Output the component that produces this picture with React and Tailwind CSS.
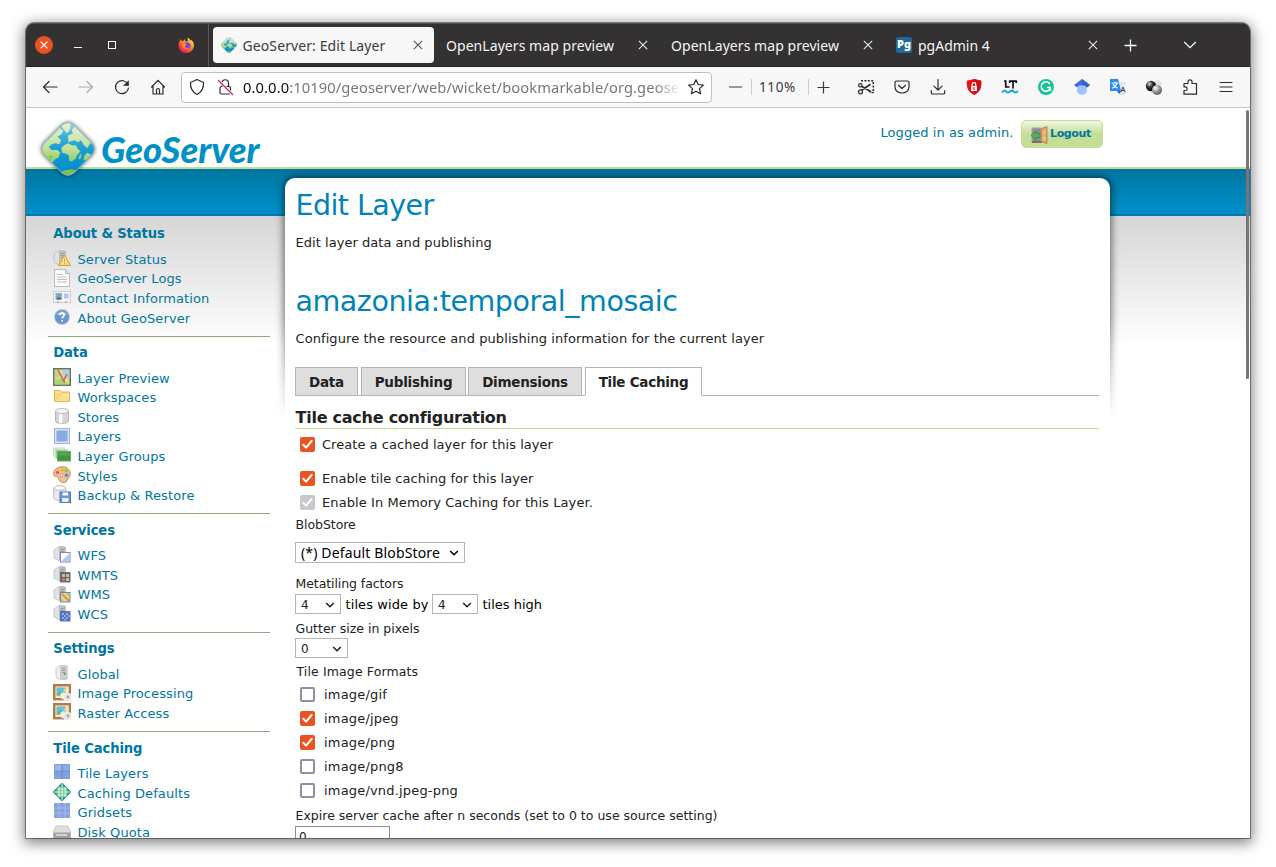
import React from "react";

const UI = "font-['Noto_Sans','Open_Sans',sans-serif]";

function Close({ className = "", color = "#e8e8e8" }) {
  return (
    <svg width="10" height="10" viewBox="0 0 10 10" className={"shrink-0 " + className}>
      <path d="M.8 .8l8.400 8.400M9.200 .8L.8 9.200" stroke={color} strokeWidth="1.100" fill="none" />
    </svg>
  );
}

function GeoDiamond({ size }) {
  return (
    <svg width={size} height={size} viewBox="0 0 56 56" className="shrink-0">
      <defs>
        <linearGradient id="sea" x1="0" y1="0" x2="0" y2="1">
          <stop offset="0" stopColor="#a5d8e6" />
          <stop offset=".25" stopColor="#3eb0da" />
          <stop offset=".55" stopColor="#149cd2" />
          <stop offset="1" stopColor="#0088c6" />
        </linearGradient>
        <linearGradient id="land" gradientUnits="userSpaceOnUse" x1="0" y1="0" x2="0" y2="48">
          <stop offset="0" stopColor="#e6f1dc" />
          <stop offset=".6" stopColor="#bfdf94" />
          <stop offset="1" stopColor="#7dc050" />
        </linearGradient>
        <clipPath id="dia">
          <path d="M21.500 3.500 Q28 -2 34.500 3.500 L52.500 21.500 Q58 28 52.500 34.500 L34.500 52.500 Q28 58 21.500 52.500 L3.500 34.500 Q-2 28 3.500 21.500 Z" />
        </clipPath>
      </defs>
      <g clipPath="url(#dia)">
        <rect width="56" height="56" fill="url(#sea)" />
        <path fill="url(#land)" d="M0 22L19 3l1 4 3 2-2 4-4 2 4 4-2 4-4-1-4 1-3 3 3 3 6 0 3 3-2 5-4 2-3 5L0 31zM21 3l3-3h7l-1 8-3 4-4-5zM28 14l5-2-1-4 4-4 8 2 12 17-5-1-3 5-3.500-3-3-5-3 2-4-2-6 2zM24 24l4-2 4 2 4 0 3 5 2 1-4 5-1 3-4 3-3-1 0-5-3-2-4-1-1-5zM40 34l2-1-1 5-2 1zM45 35l3-3 4 2-4 5-4 1zM20 53l4-3 7-1 6 1-8 7z" />
        <path d="M8 34l5 2-4 5z" fill="#8cc850" />
      </g>
      <path d="M21.500 3.500 Q28 -2 34.500 3.500 L52.500 21.500 Q58 28 52.500 34.500 L34.500 52.500 Q28 58 21.500 52.500 L3.500 34.500 Q-2 28 3.500 21.500 Z" fill="none" stroke="#8fb4ba" strokeWidth="1.200" opacity=".8" />
    </svg>
  );
}

function Firefox() {
  return (
    <svg width="17" height="17" viewBox="0 0 17 17">
      <defs>
        <linearGradient id="fx" x1=".9" y1="0" x2=".2" y2="1">
          <stop offset="0" stopColor="#fff44f" />
          <stop offset=".4" stopColor="#ff9a1f" />
          <stop offset=".75" stopColor="#ff3647" />
          <stop offset="1" stopColor="#e31587" />
        </linearGradient>
      </defs>
      <path d="M1.500 4.500L3 2l.5 2 2-.3L7 2l.5 2.500L10 4l-.5-3.500c2 .8 2.500 2 3.200 3.200L13.500 3C16 5 16.500 8 15.500 11a8 8 0 0 1-7 5C4 16 .6 12.600.6 8.500c0-1.500.3-3 .9-4z" fill="url(#fx)" />
      <circle cx="9" cy="8.800" r="3.500" fill="#7a3be8" />
      <path d="M4 7c2-1.500 4-.5 5 .3L7 9c0 2 2.500 3 5 1-1 3-6 3.500-7.500.5C4 9 3.600 8 4 7z" fill="#ff8a16" />
    </svg>
  );
}

/* Toolbar glyphs share an 18px box. */
function Glyph({ children, className = "", stroke = "#2b2a33" }) {
  return (
    <svg width="18" height="18" viewBox="0 0 18 18" fill="none" stroke={stroke} strokeWidth="1.200" strokeLinecap="round" strokeLinejoin="round" className={"shrink-0 " + className}>
      {children}
    </svg>
  );
}

function TitleBar() {
  return (
    <div className={"flex h-[44px] shrink-0 items-center bg-[#333132] border-t border-[#514f50] text-[#f4f4f4] shadow-[inset_0_-1px_0_#232122] " + UI}>
      <div className="ml-[9px] -mt-px flex size-[18px] items-center justify-center rounded-full bg-[#e95420]">
        <svg width="8" height="8" viewBox="0 0 8 8"><path d="M.6 .6l6.800 6.800M7.400 .6L.6 7.400" stroke="#fff" strokeWidth="1.300" /></svg>
      </div>
      <div className="ml-[21px] mt-[3px] h-px w-[8px] bg-white" />
      <div className="-mt-[2px] ml-[26px] size-[8px] border border-white" />
      <div className="ml-[62px] -mt-px"><Firefox /></div>
      <div className="ml-[13px] h-full w-px bg-[#5a5859]" />
      <div className="-mt-[2px] ml-[4px] flex h-[36px] w-[221px] items-center rounded-[4px] bg-[#f7f7f7] pl-[8px] pr-[11px] text-[#3c3b3d]">
        <GeoDiamond size={16} />
        <span className="ml-[5.500px] mt-[2px] whitespace-nowrap text-[14px] tracking-[0.100px]">GeoServer: Edit Layer</span>
        <Close color="#555" className="ml-auto" />
      </div>
      <div className="ml-[12px] flex w-[213px] items-center">
        <span className="whitespace-nowrap text-[14px] tracking-[0.060px]">OpenLayers map preview</span>
        <Close className="-mt-px ml-auto mr-[11px]" />
      </div>
      <div className="ml-[12px] flex w-[213px] items-center">
        <span className="whitespace-nowrap text-[14px] tracking-[0.060px]">OpenLayers map preview</span>
        <Close className="-mt-px ml-auto mr-[11px]" />
      </div>
      <div className="ml-[12px] flex w-[213px] items-center">
        <span className="-mt-px flex size-[16px] items-center justify-center rounded-[2px] bg-[#226a93] pb-[3px] font-['Noto_Sans',sans-serif] text-[11px] font-black leading-none text-white">Pg</span>
        <span className="ml-[6px] whitespace-nowrap text-[14px]">pgAdmin 4</span>
        <Close className="-mt-px ml-auto mr-[11px]" />
      </div>
      <svg width="13" height="13" viewBox="0 0 13 13" className="ml-[15px]"><path d="M6.500 .5v12M.5 6.500h12" stroke="#fff" strokeWidth="1.300" /></svg>
      <svg width="14" height="8" viewBox="0 0 14 8" className="-mt-[2px] ml-[46px]"><path d="M1.200 1l5.800 5.600L12.800 1" stroke="#fff" strokeWidth="1.200" fill="none" /></svg>
    </div>
  );
}

function ToolBar() {
  return (
    <div className={"flex h-[41px] shrink-0 items-center border-b border-[#c3c3c3] bg-[#f7f7f7] " + UI}>
      <Glyph className="ml-[15px]"><path d="M2.500 9h13.500M8 3.500L2.500 9 8 14.500" /></Glyph>
      <Glyph className="ml-[18px]" stroke="#a9a9ab"><path d="M2 9h13.500M10 3.500L15.500 9 10 14.500" /></Glyph>
      <Glyph className="ml-[18px]"><path d="M15 6.500A6.500 6.500 0 1 0 15.500 10" /><path d="M15.500 3v4.500H11z" fill="#2b2a33" strokeWidth=".6" /></Glyph>
      <Glyph className="ml-[18px]"><path d="M2.500 9L9 2.300 15.500 9M4 7.800V16h10V7.800M7.500 16v-4a1.500 1.500 0 0 1 3 0v4" /></Glyph>
      <div className="ml-[14px] flex h-[31px] w-[531px] items-center rounded-[4px] border border-[#bfbfbf] bg-white">
        <Glyph className="ml-[6px]"><path d="M9 1.500l6.500 3c.3 6-2 9.700-6.500 12C4.500 14.200 2.200 10.500 2.500 4.500z" /></Glyph>
        <Glyph className="ml-[10px]">
          <rect x="4" y="8.500" width="10.500" height="7.500" rx="1.500" /><path d="M6 8.500V5a3.200 3.200 0 0 1 6.500 0v3.500" />
          <path d="M2.500 2.500l14 14" stroke="#fff" strokeWidth="3" /><path d="M2.500 2.500l14 14" stroke="#e3174f" />
        </Glyph>
        <div className="ml-[9px] w-[438px] overflow-hidden whitespace-nowrap text-[14.700px] tracking-[0.110px] text-[#77767a] [mask-image:linear-gradient(to_right,#000_94%,transparent)]">
          <span className="text-[#0c0c0d]">0.0.0.0</span>:10190/geoserver/web/wicket/bookmarkable/org.geose
        </div>
        <Glyph className="ml-[6px]"><path d="M9 1.700l2.200 4.800 5.200.6-3.900 3.500 1.100 5.200L9 13.200l-4.600 2.600 1.100-5.200L1.600 7.100l5.200-.6z" /></Glyph>
      </div>
      <svg width="13" height="2" viewBox="0 0 13 2" className="ml-[17px]"><path d="M0 1h13" stroke="#3a3940" strokeWidth="1.200" /></svg>
      <div className="ml-[9px] h-[16px] w-px bg-[#cfcfcf]" />
      <span className="ml-[7px] w-[37px] whitespace-nowrap text-[13.500px] tracking-[0.600px] text-[#3a3940]">110%</span>
      <div className="ml-[12px] h-[16px] w-px bg-[#cfcfcf]" />
      <svg width="13" height="13" viewBox="0 0 13 13" className="ml-[8px]"><path d="M6.500 .5v12M.5 6.500h12" stroke="#3a3940" strokeWidth="1.200" /></svg>
      <div className="ml-[27px] flex items-center gap-[18px]">
        <Glyph>
          <path d="M4 2.800h12.300v11.700H12.500" strokeDasharray="2 1.400" strokeWidth="1.600" strokeLinecap="butt" />
          <path d="M5 12L13 6.500M5 8.500L13.500 13.500" strokeWidth="1.600" /><circle cx="3.300" cy="7.300" r="1.700" /><circle cx="3.500" cy="13.800" r="2" />
        </Glyph>
        <Glyph><path d="M3.500 3h11A1.500 1.500 0 0 1 16 4.500V9c0 8-14 8-14 0V4.500A1.500 1.500 0 0 1 3.500 3zM5.500 7.200L9 10.500l3.500-3.300" /></Glyph>
        <Glyph><path d="M9 1.500v10.500M5 8.200l4 4 4-4M2.300 12.500v2.200a1.300 1.300 0 0 0 1.300 1.300h10.800a1.300 1.300 0 0 0 1.300-1.300v-2.200" /></Glyph>
        <Glyph stroke="none">
          <path d="M9 1l7.200 1.800c.5 7-1 11-7.200 14.200C3 13.800 1.300 9.800 1.800 2.800z" fill="#f0101a" /><path d="M9 1l7.200 1.800c.5 7-1 11-7.200 14.200z" fill="#d60d14" />
          <path d="M6 8h6v5H6z" fill="#fff" /><path d="M7.200 8V6.500a1.800 1.800 0 0 1 3.600 0V8" stroke="#fff" strokeWidth="1.200" /><path d="M9 9.600v1.800" stroke="#e31117" />
        </Glyph>
        <Glyph>
          <path d="M3 3h2.500M4.700 2.500v6.700M4 9h4.500M8.500 3.200h7M8.700 2.500v2.500M15.300 2.500v2.500M12 3v7.500" stroke="#111" strokeWidth="1.700" strokeLinecap="butt" strokeLinejoin="miter" />
          <path d="M1.500 14c1.500-2 3-1.500 3.700-.5s2.300 1.800 3.800 0 3-1 3.700 0 2.300 1.800 3.800 0" stroke="#0da0e2" strokeWidth="1.900" />
        </Glyph>
        <Glyph stroke="none"><circle cx="9" cy="9" r="8" fill="#15c39a" /><path d="M12.500 5.500a4.700 4.700 0 1 0 1 4H10.500M13.500 9.500v3" stroke="#fff" strokeWidth="1.500" /></Glyph>
        <Glyph stroke="none"><circle cx="9" cy="12" r="5" fill="#a0c3ff" /><path d="M9 1l8 6-3.300 2.700C12 6.500 6 6.500 4.300 9.700L1 7z" fill="#4272e0" /><path d="M9 1l8 6-3.300 2.700C12.500 7.500 11 7 9 7z" fill="#3262c8" /></Glyph>
        <Glyph stroke="none">
          <path d="M9 4h7.500v13H10z" fill="#e4e5e8" /><path d="M1 1h8l3 12H1z" fill="#2b8cf0" /><path d="M8 13h4l-2 3z" fill="#1867c0" />
          <path d="M3 5h6M6 4v1M8 5.200c-.8 2.500-2.500 4-4.500 4.800M4.200 6.500c1 1.600 2.500 2.800 4 3.500" stroke="#fff" strokeWidth="1.200" />
          <path d="M12 14l2-5 2 5M12.600 12.500h2.800" stroke="#4a4f57" strokeWidth="1" />
        </Glyph>
        <svg width="18" height="18" viewBox="0 0 18 18">
          <defs>
            <radialGradient id="bk" cx=".35" cy=".3" r=".7"><stop offset="0" stopColor="#ddd" /><stop offset=".45" stopColor="#333" /><stop offset="1" stopColor="#000" /></radialGradient>
            <radialGradient id="gy" cx=".35" cy=".3" r=".75"><stop offset="0" stopColor="#fff" /><stop offset=".5" stopColor="#999" /><stop offset="1" stopColor="#555" /></radialGradient>
          </defs>
          <circle cx="13" cy="6" r="3.800" fill="#e2e2e2" /><circle cx="6" cy="8" r="5.200" fill="url(#bk)" /><circle cx="12" cy="12" r="5" fill="url(#gy)" />
        </svg>
        <Glyph><path d="M3 16.200v-3.700h1.300a1.800 1.800 0 0 0 0-3.700H3V5.500h4V3.800a2 2 0 0 1 4 0v1.700h4.500v10.700z" /></Glyph>
        <Glyph><path d="M3 4.500h12M3 9h12M3 13.500h12" /></Glyph>
      </div>
    </div>
  );
}

function Server() {
  return (
    <g>
      <path d="M1 5l5-3.500h5.500l1 1V15L6.500 16 1 13z" fill="#e2e2e2" stroke="#bdbdbd" strokeWidth=".8" />
      <path d="M6.500 2.500h5.500v12.500H6.500z" fill="#c2c2c2" stroke="#adadad" strokeWidth=".6" />
      <path d="M7.700 4.500h3M7.700 6.500h3M7.700 8.500h3" stroke="#959595" />
    </g>
  );
}

const icons = {
  status: (<><Server /><path d="M11.500 6L17.500 16.500h-12z" fill="#fbd66a" stroke="#dda032" strokeLinejoin="round" /><path d="M11.500 9v4M11.500 14v1.300" stroke="#fff" strokeWidth="1.800" /><path d="M11.500 9.500v3.300M11.500 14v1.300" stroke="#b9862a" strokeWidth=".8" /></>),
  logs: (<><path d="M1.500 .5h11l4 4v13h-15z" fill="#fafafa" stroke="#bdbdbd" /><path d="M12.500 .5v4h4" fill="#ddd" stroke="#b5b5b5" /><path d="M4 5.500h6M4 8h9M4 10.500h10M4 13h10" stroke="#bdbdbd" strokeWidth="1.100" /></>),
  contact: (<><rect x=".5" y="3.500" width="17" height="11" fill="#f4f4f4" stroke="#cfcfcf" /><rect x="2.500" y="5" width="6.500" height="6.500" fill="#79aee6" /><path d="M3.500 11.500c0-3 4.500-3 4.500 0z" fill="#2b5f9e" /><circle cx="5.800" cy="8" r="1.500" fill="#c98d56" /><path d="M11 5.500h4.500v5H11z" fill="#bcd3f0" /><path d="M11 7h4.500M11 9h4.500" stroke="#8db2e2" strokeWidth=".8" /><path d="M4 14h2M12 14h2" stroke="#999" /></>),
  about: (<><circle cx="9" cy="9" r="8" fill="#b9c7dc" /><circle cx="9" cy="9" r="7" fill="#6a96d0" /><path d="M3.500 7a6 6 0 0 1 11 0z" fill="#9bb9e2" /><path d="M6.800 7.200c0-3 4.800-2.600 4.400 0-.2 1.300-2 1.300-2 3.200M9.100 12v1.500" stroke="#fff" strokeWidth="1.600" fill="none" /></>),
  preview: (<><rect x=".8" y=".8" width="16.400" height="16.400" fill="#ecdf8c" stroke="#66745f" strokeWidth="1.600" /><path d="M9 1.600h7.400V11L10 9z" fill="#a9cdea" /><path d="M1.600 1.600H5l3 7-6.400 3z" fill="#b4d890" /><path d="M1.600 16.400V13l6-3 8.800 6.400z" fill="#a9d476" /><path d="M5 2l6.500 12.500M14 6l-3.500 7" stroke="#e0593a" strokeWidth="1.500" /></>),
  folder: (<><path d="M1.500 14.500v-11h6l1 1.500h8v9.500z" fill="#f7d77c" stroke="#e6b44c" /><path d="M2 14.300L7 10l9-3V14z" fill="#f9e08e" /><path d="M2.500 5h5M9 8h7" stroke="#fff3c0" /></>),
  stores: (<><path d="M2.500 4v10c0 3.300 13 3.300 13 0V4z" fill="#d5d5d5" stroke="#b5b5b5" /><path d="M6 6v10c1.500.5 2.500.5 3.500.5V6z" fill="#fafafa" /><ellipse cx="9" cy="4" rx="6.500" ry="2.600" fill="#f2f2f2" stroke="#bdbdbd" /></>),
  layers: (<><rect x="1.500" y="1.500" width="15" height="15" fill="#d7e2f6" stroke="#9db5e0" /><rect x="3.500" y="3.500" width="11" height="11" fill="#8aaae2" /></>),
  groups: (<><rect x=".5" y="2" width="11" height="8" fill="#dcedd6" stroke="#c5e2bc" /><rect x="2.500" y="3.500" width="12" height="9" fill="#a0cd94" stroke="#c8e4c0" /><rect x="4.500" y="5.500" width="13" height="9.500" fill="#3f9440" stroke="#66ab62" /><path d="M5.500 6.500h11v3h-11z" fill="#58a555" /></>),
  styles: (<><path d="M9.500 .8C15 .8 17.500 5 17.300 8c-.3 4-3 4-3.300 6.500-.3 2-4 2.500-6 1.500C4 14 7 10.500 3.500 10.500 0 10.500 .5 8 .8 6.500 1.500 3 5.500 .8 9.500 .8z" fill="#eec08f" stroke="#c08850" /><circle cx="4.500" cy="6.500" r="1.700" fill="#ea5c48" /><circle cx="9" cy="4.200" r="1.800" fill="#f3b32c" /><circle cx="13.200" cy="5" r="1.800" fill="#93c44c" /><circle cx="13.500" cy="9.300" r="1.800" fill="#4a96c0" /><circle cx="8.500" cy="9.500" r="1.400" fill="#fff" stroke="#a66" strokeWidth=".6" /></>),
  backup: (<><path d="M.8 3v10c0 3 12 3 12 0V3z" fill="#eaeaea" stroke="#bdbdbd" /><ellipse cx="6.800" cy="3" rx="6" ry="2.300" fill="#fafafa" stroke="#bbb" /><rect x="7" y="7" width="10.500" height="10.500" fill="#6a97dc" stroke="#4a78c4" /><path d="M9.500 7.500h5.500v3H9.500z" fill="#fff" /><path d="M9 13h6.500v4H9z" fill="#e8f3d8" /></>),
  wfs: (<><Server /><rect x="7.500" y="7.500" width="9.500" height="9.500" fill="#fff" stroke="#7486c4" /><path d="M8.500 16l8-7.500v7.500z" fill="#b4c8ee" /></>),
  wmts: (<><Server /><rect x="7.500" y="7.500" width="9.500" height="9.500" fill="#5c6074" stroke="#6a719c" /><path d="M9 9h3v3H9z" fill="#d8c36a" /><path d="M13 9h3v3h-3z" fill="#b8cf8a" /><path d="M9 13h3v3H9z" fill="#d0745a" /><path d="M13 13h3v3h-3z" fill="#d8c36a" /></>),
  wms: (<><Server /><rect x="7.500" y="7.500" width="9.500" height="9.500" fill="#e8d98a" stroke="#6f81b8" /><path d="M9 9l7 7" stroke="#e08a46" strokeWidth="1.800" /><path d="M12.500 8.500h4v4z" fill="#9bcf7a" /><path d="M8.500 13l3 3.500h-3z" fill="#9bcf7a" /></>),
  wcs: (<><Server /><rect x="7.500" y="7.500" width="9.500" height="9.500" fill="#5274c4" stroke="#5a74bc" /><path d="M9 9h2v2H9zM13 9h2v2h-2zM11 11h2v2h-2zM15 11h1.500v2H15zM9 13h2v2H9zM13 13h2v2h-2zM11 15h2v1.500h-2z" fill="#91aeea" /></>),
  global: (<><path d="M3 4.500L6 1.500h7.500l.5 1V15l-7.500 1L3 13z" fill="#ededed" stroke="#c5c5c5" strokeWidth=".8" /><path d="M7.500 2.500H14V15H7.500z" fill="#cfcfcf" stroke="#bbb" strokeWidth=".6" /><path d="M8.800 4.500h3.500M8.800 6.500h3.500M8.800 8.500h3.500" stroke="#999" /><circle cx="11.800" cy="10" r="1.100" fill="#4bad3f" /></>),
  image: (<><rect x="1.200" y="1.200" width="15.800" height="14" fill="#f1e6d0" stroke="#b47a45" strokeWidth="2.400" /><rect x="3.500" y="3.500" width="9.500" height="8" fill="#5fc0de" /><path d="M3.500 11.500L7 7.500l5 4z" fill="#72b23c" /><path d="M8 4l2.500 2L13 4v5z" fill="#d9e070" /><circle cx="10.500" cy="11.800" r="3.200" fill="#efefef" stroke="#dcdcdc" strokeWidth=".7" /><circle cx="14.500" cy="13.300" r="4" fill="#e4e4e4" stroke="#f4f4f4" /><circle cx="15" cy="13" r="1.400" fill="#b79f93" /></>),
  tiles: (<><rect x="1" y="1" width="16" height="15" fill="#82a1dc" /><path d="M9 1v15M1 8.500h16" stroke="#6f90cf" strokeWidth="1.200" /><path d="M2 2h6v5.500H2z" fill="#9db7e8" /><path d="M10.200 2H16v5.500h-5.800z" fill="#8face2" /></>),
  caching: (<><path d="M9 1L17 9 9 17 1 9z" fill="#2aa79d" stroke="#18918c" strokeWidth="1.800" strokeLinejoin="round" /><circle cx="9" cy="9" r="6" fill="#62bc9c" /><path d="M6 4v10M9 1v16M12 4v10M4 6h10M1 9h16M4 12h10" stroke="#dff0d0" strokeWidth="1" /></>),
  grids: (<><rect x="1" y="1" width="16" height="15" fill="#86a4de" /><path d="M6 1v15M12 1v15M1 6h16M1 11h16" stroke="#a5bbea" strokeWidth="1" /></>),
  disk: (<><path d="M3 4h12l2.500 6v6H.5v-6z" fill="#dedede" stroke="#c5c5c5" /><path d="M.5 10.500h17V16H.5z" fill="#a2a2a2" /><path d="M3 13h11" stroke="#e5e5e5" strokeWidth="1.500" /></>),
};

const menu = [
  { title: "About & Status", items: [["status", "Server Status"], ["logs", "GeoServer Logs"], ["contact", "Contact Information"], ["about", "About GeoServer"]] },
  { title: "Data", items: [["preview", "Layer Preview"], ["folder", "Workspaces"], ["stores", "Stores"], ["layers", "Layers"], ["groups", "Layer Groups"], ["styles", "Styles"], ["backup", "Backup & Restore"]] },
  { title: "Services", items: [["wfs", "WFS"], ["wmts", "WMTS"], ["wms", "WMS"], ["wcs", "WCS"]] },
  { title: "Settings", items: [["global", "Global"], ["image", "Image Processing"], ["image", "Raster Access"]] },
  { title: "Tile Caching", items: [["tiles", "Tile Layers"], ["caching", "Caching Defaults"], ["grids", "Gridsets"], ["disk", "Disk Quota"]] },
];

function Sidebar() {
  return (
    <nav className="ml-[22px] w-[222px] shrink-0 pt-[48.800px] text-[#0076a1]">
      {menu.map((s) => (
        <section key={s.title} className="border-b border-[#94a67f] pb-[7.350px]">
          <h3 className="h-[32px] whitespace-nowrap pl-[5.300px] pt-[0.700px] text-[13.200px] font-bold leading-[32px] tracking-[-0.140px]">{s.title}</h3>
          <ul>
            {s.items.map(([icon, label]) => (
              <li key={label} className="flex h-[19.600px] items-center pl-[5px]">
                <svg width="18" height="18" viewBox="0 0 18 18" fill="none" className="-mt-[3px] shrink-0">{icons[icon]}</svg>
                <a className="ml-[6.500px] whitespace-nowrap text-[13px] tracking-[0.100px]">{label}</a>
              </li>
            ))}
          </ul>
        </section>
      ))}
    </nav>
  );
}

function Check({ on, disabled }) {
  if (!on) return <span className="-mt-px size-[15px] shrink-0 rounded-[2px] border-2 border-[#8f8f9d] bg-white" />;
  return (
    <span className={"-mt-px flex size-[15px] shrink-0 items-center justify-center rounded-[2px] " + (disabled ? "bg-[#c7c7cd]" : "bg-[#e95420]")}>
      <svg width="11" height="11" viewBox="0 0 11 11"><path d="M1.300 5.800l2.800 2.800 5.500-6.600" stroke="#fff" strokeWidth="2" fill="none" strokeLinecap="round" strokeLinejoin="round" /></svg>
    </span>
  );
}

function CheckRow({ on, disabled, children, className = "gap-[7px] tracking-[0.040px]" }) {
  return (
    <label className={"flex h-[24px] items-center whitespace-nowrap pl-[5px] " + className}>
      <Check on={on} disabled={disabled} />
      <span>{children}</span>
    </label>
  );
}

const format = "gap-[9px] tracking-[0.180px]";

function Select({ children, className }) {
  return (
    <span className={"inline-flex shrink-0 items-center justify-between border border-[#b5b5b5] bg-white pl-[5px] pr-[5px] " + className}>
      <span className="whitespace-nowrap">{children}</span>
      <svg width="10" height="6" viewBox="0 0 10 6"><path d="M1.200 1L5 4.700 8.800 1" stroke="currentColor" strokeWidth="1.600" fill="none" /></svg>
    </span>
  );
}

function Tab({ children, active, className }) {
  return (
    <div className={"h-[29px] whitespace-nowrap border text-center font-bold text-[13.500px] leading-[29px] " + (active ? "border-[#b5b5b5] border-b-white bg-white " : "border-[#b5b5b5] bg-[#dedede] ") + className}>
      {children}
    </div>
  );
}

function Panel() {
  return (
    <main className="relative ml-[15px] mt-[9px] h-[700px] w-[825px] shrink-0">
      <div className="pointer-events-none absolute -inset-x-[12px] -top-[12px] h-[252px] overflow-hidden [mask-image:linear-gradient(#000_60%,transparent)]">
        <div className="mx-[12px] mt-[12px] h-[300px] rounded-[10px] shadow-[0_0_8px_1px_rgba(0,0,0,0.6)]" />
      </div>
      <div className="relative h-full rounded-t-[10px] bg-white pl-[10.500px] pr-[11px] text-[13px] text-[#222]">
        <h1 className="h-[52px] text-[28.500px] leading-[56px] tracking-[-0.550px] text-[#0083b8]">Edit Layer</h1>
        <p className="h-[44px] leading-[26px] tracking-[0.040px]">Edit layer data and publishing</p>
        <h1 className="h-[52px] text-[28.500px] leading-[56px] tracking-[-0.440px] text-[#0083b8]">amazonia:temporal_mosaic</h1>
        <p className="h-[41px] leading-[26px] tracking-[0.080px]">Configure the resource and publishing information for the current layer</p>
        <div className="-ml-[0.500px] flex h-[29px] gap-[2px] border-b border-[#b5b5b5]">
          <Tab className="w-[63px] tracking-[-0.250px]">Data</Tab>
          <Tab className="ml-px w-[105px] tracking-[-0.230px]">Publishing</Tab>
          <Tab className="w-[114px] tracking-[-0.260px]">Dimensions</Tab>
          <Tab active className="ml-px w-[117px] tracking-[-0.260px]">Tile Caching</Tab>
        </div>
        <h2 className="-ml-[0.500px] h-[33px] border-b border-[#bfdb8f] pl-[0.500px] text-[16px] font-bold leading-[43px] tracking-[-0.250px]">Tile cache configuration</h2>
        <div className="-ml-[0.500px] pt-[4px]">
          <CheckRow on>Create a cached layer for this layer</CheckRow>
          <div className="h-[10px]" />
          <CheckRow on>Enable tile caching for this layer</CheckRow>
          <CheckRow on disabled className="gap-[7px] tracking-[0.090px]">Enable In Memory Caching for this Layer.</CheckRow>
        </div>
        <p className="h-[27px] text-[12.500px] leading-[20px] tracking-[-0.050px]">BlobStore</p>
        <div className="-ml-[0.500px] flex"><Select className="h-[21px] w-[170px] font-['Noto_Sans',sans-serif] text-[14px] tracking-[0.150px] text-black">(*) Default BlobStore</Select></div>
        <p className="mt-[10px] h-[21px] text-[12.500px] leading-[22px] tracking-[-0.080px]">Metatiling factors</p>
        <div className="-ml-[0.500px] flex h-[20px] items-center text-black">
          <Select className="h-[20px] w-[46px] pt-px text-[12px] text-[#222]">4</Select>
          <span className="ml-[4.500px] w-[86.500px] whitespace-nowrap pt-px tracking-[0.100px]">tiles wide by</span>
          <Select className="h-[20px] w-[46px] pt-px text-[12px] text-[#222]">4</Select>
          <span className="ml-[4.500px] whitespace-nowrap pt-px">tiles high</span>
        </div>
        <p className="mt-[4px] h-[20px] text-[12.500px] leading-[22px] tracking-[0px]">Gutter size in pixels</p>
        <div className="-ml-[0.500px] flex"><Select className="h-[20px] w-[53px] pt-px text-[12px]">0</Select></div>
        <p className="mt-[3px] h-[22px] pl-px text-[12.500px] leading-[22px] tracking-[0.120px]">Tile Image Formats</p>
        <div className="-ml-[0.500px]">
          <CheckRow className={format}>image/gif</CheckRow>
          <CheckRow className={format} on>image/jpeg</CheckRow>
          <CheckRow className={format} on>image/png</CheckRow>
          <CheckRow className={format}>image/png8</CheckRow>
          <CheckRow className={format}>image/vnd.jpeg-png</CheckRow>
        </div>
        <p className="h-[23px] text-[12.500px] leading-[26px] tracking-[0.015px]">Expire server cache after n seconds (set to 0 to use source setting)</p>
        <div className="-ml-[0.500px] h-[22px] w-[95px] border border-[#8f8f8f] bg-white pl-[3px] text-[12px] leading-[21px]">0</div>
      </div>
    </main>
  );
}

function Header() {
  return (
    <header className="flex h-[61px] shrink-0 items-start">
      <div className="ml-[15px] mt-[14px] drop-shadow-[0_0_2px_rgba(0,0,0,0.6)]"><GeoDiamond size={54} /></div>
      <svg width="166" height="40" viewBox="0 0 166 40" className="ml-[5px] mt-[22px]">
        <text x="1" y="33" fontFamily="Lato" fontWeight="900" fontStyle="italic" fontSize="36" fill="#0090c8" textLength="158.500" lengthAdjust="spacingAndGlyphs">GeoServer</text>
      </svg>
      <span className="ml-[614.500px] mt-[16px] w-[140.500px] whitespace-nowrap text-[13px] leading-[18px] tracking-[0.070px] text-[#0076a1]">Logged in as admin.</span>
      <button className="mt-[12px] flex h-[28px] w-[82px] items-center rounded-[5px] border border-[#c5de9a] bg-[linear-gradient(#f1f7e4,#c5de96_50%,#c5de96)] pl-[8px] text-[11px] font-bold text-[#0076a1]">
        <svg width="18" height="18" viewBox="0 0 18 18" className="mt-px">
          <path d="M2 2h9v14H2z" fill="#8a8f94" stroke="#a9a9a9" /><path d="M2 16h10" stroke="#6b5b50" strokeWidth="1.500" />
          <path d="M1 9.500L6 5v2.500h4v4H6V14z" fill="#58b25c" stroke="#2f8038" strokeWidth=".7" />
          <path d="M11 2.500L17 .5v17l-6-2z" fill="#dba970" stroke="#b07a40" strokeWidth=".8" /><path d="M13 5l2.500-.7v4L13 8.500zM13 10.500h2.500v4L13 14z" fill="#e9c592" />
        </svg>
        <span className="ml-[2px] tracking-[-0.380px]">Logout</span>
      </button>
    </header>
  );
}

export default function App() {
  return (
    <div className="flex h-[867px] w-[1276px] overflow-hidden bg-white pl-[26px] pt-[23px] font-['DejaVu_Sans',sans-serif]">
      <div className="h-[815px] w-[1224px] rounded-t-[8px] shadow-[0_0_0_1px_rgba(0,0,0,0.4),0_3px_14px_2px_rgba(0,0,0,0.5)]">
        <div className="flex h-full flex-col overflow-hidden rounded-t-[8px] bg-white">
          <TitleBar />
          <ToolBar />
          <div className="relative flex h-[730px] shrink-0 flex-col overflow-hidden bg-[linear-gradient(#fff_59px,#c5de96_59px,#c5de96_61px,#0076a1_61px,#0090cb_106px,#00729c_106px,#0080b4_108px,#d6d6d6_108px,#dcdcdc_128px,#fff_238px)]">
            <Header />
            <div className="flex min-h-0 flex-1 items-start">
              <Sidebar />
              <Panel />
            </div>
            <div className="absolute right-px top-[2px] h-[269px] w-[3px] rounded-full bg-[#77777a]" />
          </div>
        </div>
      </div>
    </div>
  );
}
